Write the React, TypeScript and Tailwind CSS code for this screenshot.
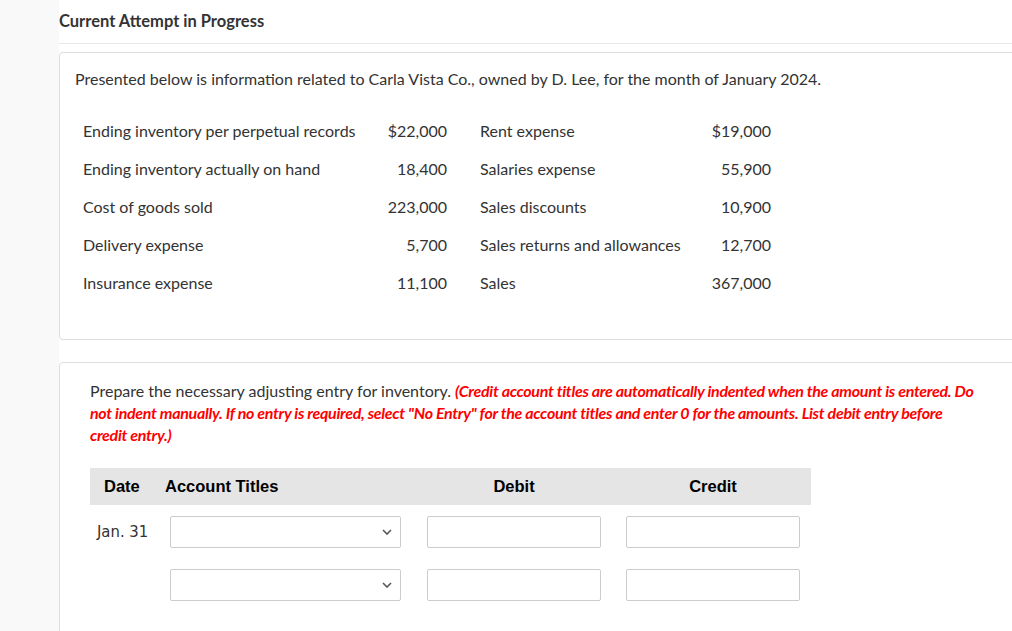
import React from "react";

const facts: [string, string, string, string][] = [
  ["Ending inventory per perpetual records", "$22,000", "Rent expense", "$19,000"],
  ["Ending inventory actually on hand", "18,400", "Salaries expense", "55,900"],
  ["Cost of goods sold", "223,000", "Sales discounts", "10,900"],
  ["Delivery expense", "5,700", "Sales returns and allowances", "12,700"],
  ["Insurance expense", "11,100", "Sales", "367,000"],
];

function Chevron() {
  return (
    <svg width="10" height="6" viewBox="0 0 10 6" className="shrink-0">
      <path d="M1 1 L5 5 L9 1" fill="none" stroke="#555" strokeWidth="1.6" />
    </svg>
  );
}

function EntryRow({ date }: { date?: string }) {
  return (
    <div className="flex items-center h-[32px]">
      <div className="w-[80px] pl-[7px] text-[16.5px] text-[#333] font-['DejaVu_Sans_Condensed','Liberation_Sans',sans-serif]">
        {date}
      </div>
      <div className="w-[231px] h-[32px] border border-[#cccccc] rounded-[2px] flex items-center justify-end pr-[8px]">
        <Chevron />
      </div>
      <div className="w-[174px] h-[32px] ml-[26px] border border-[#cccccc] rounded-[2px]" />
      <div className="w-[174px] h-[32px] ml-[25px] border border-[#cccccc] rounded-[2px]" />
    </div>
  );
}

export default function App() {
  return (
    <div className="w-[1012px] h-[631px] overflow-hidden bg-white flex font-['Lato',sans-serif] text-[#2f2f2f]">
      {/* left gutter */}
      <div className="w-[59px] shrink-0 bg-[#f9f9f9]" />

      <div className="flex-1 flex flex-col">
        <div className="h-[44px] shrink-0 border-b border-[#e9e9e9] flex items-center">
          <h1 className="text-[16.5px] font-bold text-[#333]">Current Attempt in Progress</h1>
        </div>

        {/* info card */}
        <div className="mt-[8px] w-[980px] border border-[#dedede] rounded-[4px] bg-white pl-[15px] pt-[15px] pb-[37px] shrink-0">
          <p className="text-[16px] leading-[22px] text-[#333]">
            Presented below is information related to Carla Vista Co., owned by D. Lee, for the month of January 2024.
          </p>
          <div className="mt-[22px] ml-[8px] grid grid-cols-[300px_64px_233px_91px] text-[16px] text-[#333] whitespace-nowrap">
            {facts.map((r, i) => (
              <React.Fragment key={i}>
                <div className="h-[38px] flex items-center">{r[0]}</div>
                <div className="h-[38px] flex items-center justify-end">{r[1]}</div>
                <div className="h-[38px] flex items-center pl-[33px]">{r[2]}</div>
                <div className="h-[38px] flex items-center justify-end">{r[3]}</div>
              </React.Fragment>
            ))}
          </div>
        </div>

        {/* journal entry card */}
        <div className="mt-[22px] w-[980px] h-[320px] shrink-0 border border-[#dedede] rounded-[4px] bg-white pl-[30px] pt-[17px]">
          <p className="w-[886px] text-[16px] leading-[22px] text-[#333]">
            Prepare the necessary adjusting entry for inventory.{" "}
            <span className="text-[#ff0000] font-bold italic tracking-[-0.3px]">
              (Credit account titles are automatically indented when the amount is entered. Do not indent manually. If no entry is required, select "No Entry" for the account titles and enter 0 for the amounts. List debit entry before credit entry.)
            </span>
          </p>

          <div className="mt-[22px] w-[721px] h-[37px] bg-[#e5e5e5] flex items-center text-[16.5px] font-bold text-black font-['Liberation_Sans',sans-serif]">
            <div className="w-[75px] pl-[14px]">Date</div>
            <div className="w-[262px]">Account Titles</div>
            <div className="w-[174px] text-center">Debit</div>
            <div className="w-[25px]" />
            <div className="w-[174px] text-center">Credit</div>
          </div>

          <div className="mt-[11px] flex flex-col gap-[21px]">
            <EntryRow date="Jan. 31" />
            <EntryRow />
          </div>
        </div>
      </div>
    </div>
  );
}
